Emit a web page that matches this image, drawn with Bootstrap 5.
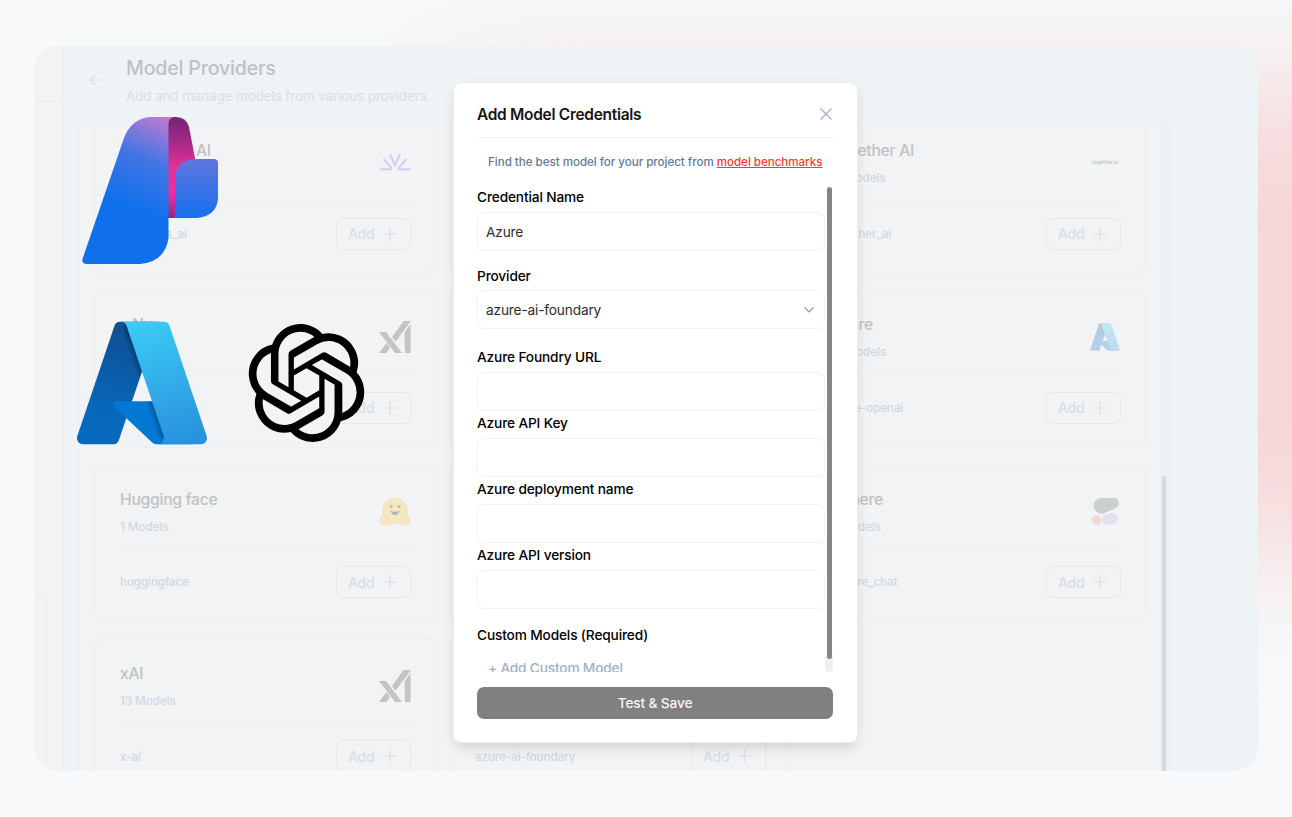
<!DOCTYPE html>
<html lang="en">
<head>
<meta charset="utf-8">
<title>Model Providers</title>
<meta name="viewport" content="width=device-width, initial-scale=1">
<link rel="stylesheet" href="https://cdn.jsdelivr.net/npm/bootstrap@5.3.0/dist/css/bootstrap.min.css">
<style>
body{width:1292px;height:817px;overflow:hidden;background:#f7f9fb;font-family:Inter,sans-serif;color:#111;position:relative}
.backdrop{position:absolute;inset:0;overflow:hidden}
.backdrop::before{content:"";position:absolute;left:400px;top:88px;right:-300px;height:462px;border-radius:110px;background:#f6d7d8;filter:blur(62px)}
.stage{position:relative;width:1224px;height:725px;margin:46px 0 0 34px;border-radius:24px;overflow:hidden;background:#eef3f6}
.rail{width:29px;flex:none;background:#f1f3f5;border-right:1px solid #e9edf0}
.rail-top{height:56px;border-bottom:1px solid #e9ebed}
.rail-box{width:13px;margin-top:493px;height:180px;border:1px solid #ebedef;border-left:0;border-top-right-radius:6px}
.page-head{height:75px;padding:10px 0 0 25px}
.back{width:14px;margin-top:17px;margin-right:24px;color:#d8dde1}
.page-title{font-size:19.6px;font-weight:500;line-height:25px;color:#bfc1c3;letter-spacing:-.2px}
.page-sub{font-size:13.5px;line-height:20px;margin-top:5px;color:#dbdfe3;letter-spacing:-.14px}
.board{width:1090px;height:700px;margin-left:16px;border:1px solid #ebeef1;border-radius:8px;overflow:hidden;background:#f1f3f5}
.tiles{display:grid;grid-template-columns:repeat(3,340px);grid-auto-rows:158.3px;gap:16px 15px;margin:-7px 0 0 15px;width:1050px}
.tile{border:1px solid #eceef0;border-radius:8px;padding:24px 23px 0 24px}
.tile-top{height:62px;border-bottom:1px solid #ebedf0}
.tile-name{font-size:15.7px;font-weight:500;line-height:22px;color:#c0c2c4;letter-spacing:-.27px}
.tile-count{font-size:11.7px;font-weight:500;line-height:16px;margin-top:8px;color:#d0d8e0;letter-spacing:-.06px}
.tile-logo{width:32px;margin-top:7px}
.tile-foot{padding-top:15.500px}
.tile-id{font-size:11.7px;font-weight:500;color:#d0d8e0;letter-spacing:-.12px;position:relative;top:1px}
.add-btn{width:75px;height:32px;border:1.5px solid #e7eaed;border-radius:7px;font-size:14px;font-weight:500;color:#d9dfe5;padding:0 13px 0 11px;letter-spacing:-.2px}
.track{width:8px;height:650px;background:#ecf0f3}
.thumb{width:4px;height:300px;margin:354px 0 0 2px;border-radius:2px;background:#d8dbdd}
.brand{position:absolute}
.dialog-box{position:absolute;left:454px;top:83px;width:403px;height:659px;background:#fff;border-radius:7px;padding:0 23px;box-shadow:0 0 0 1px #eceeef,0 8px 14px -3px rgba(0,0,0,.13),0 2px 18px rgba(0,0,0,.035)}
.dialog-top{height:55px;border-bottom:1.5px solid #f1f2f5;padding-top:8px}
.dialog-name{font-size:15.5px;font-weight:600;letter-spacing:-.3px;color:#151515;padding-top:1px}
.hint{font-size:11.6px;font-weight:500;line-height:16px;margin-top:16px;height:31px;color:#607b96;padding-left:11px;white-space:nowrap;letter-spacing:-.03px}
.hint a{color:#ff3636}
.form-view{height:487px;overflow:hidden}
.fields{width:348px}
.fields label{display:block;font-size:13.7px;font-weight:500;line-height:20px;letter-spacing:-.15px;height:27px;color:#000;padding-top:2px}
.fields .field{height:39px;border:1.3px solid #f1f2f6;border-radius:7px;font-size:13.7px;letter-spacing:-.17px;color:#2c2c2c;padding:1px 8px 0;background:#fff;box-shadow:none}
.group-gap{margin-top:14px}
.bar-track{width:8px;height:487px;background:linear-gradient(#fff 470px,#f0f0f1 470px);border-radius:4px}
.bar-thumb{width:5px;height:472px;margin:2px 0 0 2px;border-radius:3px;background:#858585}
.add-model{font-size:13.7px;font-weight:500;color:#9fb1c4;line-height:20px;padding-left:11px;margin-top:8px;letter-spacing:-.18px}
.save-btn{height:32px;border:0;border-radius:7px;background:#808080;color:#f6f6f6;font-size:13.7px;letter-spacing:-.15px;font-weight:500;padding:0;width:356px;margin-top:15px}
</style>
</head>
<body>
<svg width="0" height="0" class="position-absolute"><defs>
<linearGradient id="azL" x1="58.97" y1="7.41" x2="37.79" y2="75" gradientUnits="userSpaceOnUse"><stop stop-color="#114a8b"/><stop offset="1" stop-color="#0669bc"/></linearGradient>
<linearGradient id="azR" x1="48" y1="6" x2="75" y2="88" gradientUnits="userSpaceOnUse"><stop stop-color="#3ccbf4"/><stop offset="1" stop-color="#2892df"/></linearGradient>
<clipPath id="azClip"><path d="M33.34 6.54h26.04l-27.03 80.1H8L29.4 9.38zM71.17 60.26H29.88l27 29.200h24.700z"/></clipPath>
<symbol id="azure" viewBox="0 0 96 96">
<path fill="url(#azL)" d="M33.34 6.54h26.04l-27.03 80.1a4.15 4.15 0 0 1-3.94 2.81H8.15a4.14 4.14 0 0 1-3.93-5.47L29.4 9.38a4.15 4.15 0 0 1 3.94-2.83z"/>
<path fill="#0078d4" d="M71.17 60.26H29.88a1.91 1.91 0 0 0-1.3 3.31l26.53 24.76a4.17 4.17 0 0 0 2.85 1.13h23.38z"/>
<g clip-path="url(#azClip)" fill="none" stroke="#000" stroke-opacity=".055"><path stroke-width="6" d="M37 9l25.500 76"/><path stroke-width="4.500" d="M37 9l25.500 76"/><path stroke-width="3" d="M37 9l25.500 76"/><path stroke-width="2" d="M37 9l25.500 76"/></g>
<path fill="url(#azR)" d="M66.6 9.36a4.14 4.14 0 0 0-3.93-2.82H33.65a4.15 4.15 0 0 1 3.93 2.82l25.18 74.62a4.15 4.15 0 0 1-3.93 5.48h29.02a4.15 4.15 0 0 0 3.93-5.48z"/>
</symbol>
<symbol id="xai" viewBox="0 0 32 32"><path fill="currentColor" d="M0 11h7l16 21h-7zM0 32l7.4-10 3.6 4.7L7.5 32zM13 16 24.5 0H32L16.6 20.8zM25.500 11.5 31.500 3v29H26z"/></symbol>
<symbol id="plus" viewBox="0 0 14 14"><path d="M7 .5v13M.5 7h13" stroke="currentColor" stroke-width="1.1" fill="none"/></symbol>
</defs></svg>

<div class="backdrop"></div>

<main class="stage d-flex">
  <aside class="rail"><div class="rail-top"></div><div class="rail-box"></div></aside>
  <section class="flex-grow-1">
    <header class="page-head d-flex">
      <svg class="back" height="14" viewBox="0 0 14 14" fill="none" stroke="currentColor" stroke-width="1.2"><path d="M12.5 7H2M7 2 2 7l5 5"/></svg>
      <div><div class="page-title">Model Providers</div><div class="page-sub">Add and manage models from various providers</div></div>
    </header>
    <div class="board d-flex justify-content-between">
      <div class="tiles">
        <article class="tile"><div class="tile-top d-flex justify-content-between"><div><div class="tile-name" style="padding-left:76px">AI</div></div>
          <svg class="tile-logo" height="32" viewBox="0 0 32 32" fill="none" stroke="#d5cdf5" stroke-width="2.1"><path d="M11 7.500l5 10.500L21 7.500M4.500 12 12 20.500v1.800H.5M27.500 12 20 20.500v1.800h11.500"/></svg></div>
          <div class="tile-foot d-flex justify-content-between align-items-center"><span class="tile-id" style="padding-left:46px">s_ai</span><button class="btn add-btn d-flex align-items-center justify-content-between">Add <svg width="14" height="14"><use href="#plus"/></svg></button></div></article>
        <article class="tile"></article>
        <article class="tile"><div class="tile-top d-flex justify-content-between"><div><div class="tile-name">Together AI</div><div class="tile-count">12 Models</div></div>
          <svg class="tile-logo" height="32" viewBox="0 0 32 32"><text x="3" y="17" font-size="5" fill="#b4b6b8" textLength="26">together.ai</text></svg></div>
          <div class="tile-foot d-flex justify-content-between align-items-center"><span class="tile-id">together_ai</span><button class="btn add-btn d-flex align-items-center justify-content-between">Add <svg width="14" height="14"><use href="#plus"/></svg></button></div></article>

        <article class="tile"><div class="tile-top d-flex justify-content-between"><div><div class="tile-name" style="padding-left:12px">Nx</div></div>
          <svg class="tile-logo" height="32" color="#c2c4c6"><use href="#xai"/></svg></div>
          <div class="tile-foot d-flex justify-content-end align-items-center"><button class="btn add-btn d-flex align-items-center justify-content-between">Add <svg width="14" height="14"><use href="#plus"/></svg></button></div></article>
        <article class="tile"></article>
        <article class="tile"><div class="tile-top d-flex justify-content-between"><div><div class="tile-name">Azure</div><div class="tile-count">14 Models</div></div>
          <svg class="tile-logo" height="32" opacity=".25"><use href="#azure"/></svg></div>
          <div class="tile-foot d-flex justify-content-between align-items-center"><span class="tile-id">azure-openai</span><button class="btn add-btn d-flex align-items-center justify-content-between">Add <svg width="14" height="14"><use href="#plus"/></svg></button></div></article>

        <article class="tile"><div class="tile-top d-flex justify-content-between"><div><div class="tile-name">Hugging face</div><div class="tile-count">1 Models</div></div>
          <svg class="tile-logo" height="32" viewBox="0 0 32 32"><g stroke="#f4dfc8" stroke-width="1" fill="#f3e8c0"><circle cx="16" cy="15" r="12.500"/><path d="M3 20c1.500-2 4-1 7 4 2 1 3 3 1.500 4.200-3 1-7 .6-9 0-1.500-2-1-7 .5-8.200zM29 20c-1.500-2-4-1-7 4-2 1-3 3-1.500 4.200 3 1 7 .6 9 0 1.500-2 1-7-.5-8.200z"/></g><path d="M11.500 14.500q4.500 2.500 9 0-1 4.500-4.500 4.500t-4.500-4.500z" fill="#b3b7bc"/><circle cx="12" cy="10.500" r="1.600" fill="#bcbfc2"/><circle cx="20" cy="10.500" r="1.600" fill="#bcbfc2"/></svg></div>
          <div class="tile-foot d-flex justify-content-between align-items-center"><span class="tile-id">huggingface</span><button class="btn add-btn d-flex align-items-center justify-content-between">Add <svg width="14" height="14"><use href="#plus"/></svg></button></div></article>
        <article class="tile"></article>
        <article class="tile"><div class="tile-top d-flex justify-content-between"><div><div class="tile-name">Cohere</div><div class="tile-count">9 Models</div></div>
          <svg class="tile-logo" height="32" viewBox="0 0 32 32"><path d="M10.500 2h13.500a5.300 5.300 0 0 1 3 10L15 17.300A7.800 7.800 0 1 1 10.500 2z" fill="#c9d0cf"/><circle cx="7.500" cy="23.800" r="4.800" fill="#f2d8d4"/><path d="M18 18 23 16.800a5.900 5.900 0 0 1 0 11.800h-4.500A5.300 5.300 0 0 1 18 18z" fill="#e7dfef"/></svg></div>
          <div class="tile-foot d-flex justify-content-between align-items-center"><span class="tile-id">cohere_chat</span><button class="btn add-btn d-flex align-items-center justify-content-between">Add <svg width="14" height="14"><use href="#plus"/></svg></button></div></article>

        <article class="tile"><div class="tile-top d-flex justify-content-between"><div><div class="tile-name">xAI</div><div class="tile-count">13 Models</div></div>
          <svg class="tile-logo" height="32" color="#c2c4c6"><use href="#xai"/></svg></div>
          <div class="tile-foot d-flex justify-content-between align-items-center"><span class="tile-id">x-ai</span><button class="btn add-btn d-flex align-items-center justify-content-between">Add <svg width="14" height="14"><use href="#plus"/></svg></button></div></article>
        <article class="tile"><div class="tile-top"></div>
          <div class="tile-foot d-flex justify-content-between align-items-center"><span class="tile-id">azure-ai-foundary</span><button class="btn add-btn d-flex align-items-center justify-content-between">Add <svg width="14" height="14"><use href="#plus"/></svg></button></div></article>
      </div>
      <div class="track d-flex"><div class="thumb"></div></div>
    </div>
  </section>
</main>

<svg class="brand" style="left:82px;top:115.500px" width="137" height="149" viewBox="0 0 137 149" preserveAspectRatio="none">
  <defs>
    <linearGradient id="f1" x1="92" y1="0" x2="50" y2="92" gradientUnits="userSpaceOnUse"><stop stop-color="#cc7bcf"/><stop offset=".12" stop-color="#ac7ad4"/><stop offset=".5" stop-color="#4375e4"/><stop offset="1" stop-color="#1070ec"/></linearGradient>
    <linearGradient id="f2" x1="0" y1="0" x2="0" y2="1"><stop stop-color="#712575"/><stop offset=".2" stop-color="#9a2884"/><stop offset=".48" stop-color="#e02f97"/><stop offset=".75" stop-color="#ef30a4"/><stop offset="1" stop-color="#8c2c85"/></linearGradient>
    <linearGradient id="f3" x1="0" y1="0" x2="0" y2="1"><stop stop-color="#5f76df"/><stop offset="1" stop-color="#1670ec"/></linearGradient>
  </defs>
  <path fill="url(#f2)" d="M86 1h8q10 0 13 10l6 31-5 60H86z"/>
  <path fill="url(#f3)" d="M93 102V63Q94 44 113 43h19q4 0 4 4v35q-1 18-21 20z"/>
  <path fill="url(#f1)" d="M92 1H68Q49 3 42 22L.5 143q-1 5 4 5H58q25-2 28.500-26V8q0-6 5.500-7z"/>
</svg>
<svg class="brand" style="left:70.500px;top:311.500px" width="142" height="142"><use href="#azure"/></svg>
<svg class="brand" style="left:247.500px;top:324px" width="117" height="118" viewBox="0 0 24 24" preserveAspectRatio="none"><path d="M22.282 9.821a5.985 5.985 0 0 0-.516-4.910 6.046 6.046 0 0 0-6.510-2.900A6.065 6.065 0 0 0 4.981 4.182a5.985 5.985 0 0 0-3.998 2.900 6.046 6.046 0 0 0 .743 7.097 5.980 5.980 0 0 0 .510 4.911 6.051 6.051 0 0 0 6.515 2.900A5.985 5.985 0 0 0 13.260 24a6.056 6.056 0 0 0 5.772-4.206 5.990 5.990 0 0 0 3.997-2.900 6.056 6.056 0 0 0-.747-7.073z" fill="#f1f3f5"/><path d="M22.282 9.821a5.985 5.985 0 0 0-.516-4.910 6.046 6.046 0 0 0-6.510-2.900A6.065 6.065 0 0 0 4.981 4.182a5.985 5.985 0 0 0-3.998 2.900 6.046 6.046 0 0 0 .743 7.097 5.980 5.980 0 0 0 .510 4.911 6.051 6.051 0 0 0 6.515 2.900A5.985 5.985 0 0 0 13.260 24a6.056 6.056 0 0 0 5.772-4.206 5.990 5.990 0 0 0 3.997-2.900 6.056 6.056 0 0 0-.747-7.073zM13.260 22.430a4.476 4.476 0 0 1-2.876-1.040l.141-.081 4.779-2.758a.795.795 0 0 0 .392-.681v-6.737l2.020 1.168a.071.071 0 0 1 .038.052v5.583a4.504 4.504 0 0 1-4.494 4.494zM3.600 18.304a4.470 4.470 0 0 1-.535-3.014l.142.085 4.783 2.759a.771.771 0 0 0 .780 0l5.843-3.369v2.332a.080.080 0 0 1-.033.062L9.740 19.950a4.500 4.500 0 0 1-6.140-1.646zM2.340 7.896a4.485 4.485 0 0 1 2.366-1.973V11.600a.766.766 0 0 0 .388.676l5.815 3.355-2.020 1.168a.076.076 0 0 1-.071 0l-4.830-2.786A4.504 4.504 0 0 1 2.340 7.872zm16.597 3.855l-5.833-3.387L15.119 7.200a.076.076 0 0 1 .071 0l4.830 2.791a4.494 4.494 0 0 1-.676 8.105v-5.678a.790.790 0 0 0-.407-.667zm2.010-3.023l-.141-.085-4.774-2.782a.776.776 0 0 0-.785 0L9.409 9.230V6.897a.066.066 0 0 1 .028-.061l4.830-2.787a4.500 4.500 0 0 1 6.680 4.660zm-12.640 4.135l-2.020-1.164a.080.080 0 0 1-.038-.057V6.075a4.500 4.500 0 0 1 7.375-3.453l-.142.080L8.704 5.460a.795.795 0 0 0-.393.681zm1.097-2.365l2.602-1.500 2.607 1.500v2.999l-2.597 1.500-2.607-1.500z" fill="#000"/></svg>

<div class="dialog-box" role="dialog">
  <div class="dialog-top d-flex justify-content-between align-items-center"><span class="dialog-name">Add Model Credentials</span>
    <svg width="16" height="16" viewBox="0 0 16 16" stroke="#a3b4c8" stroke-width="1.400" fill="none"><path d="M2.500 2.500l11 11M13.500 2.500l-11 11"/></svg></div>
  <div class="hint">Find the best model for your project from <a href="#">model benchmarks</a></div>
  <div class="form-view d-flex">
    <div class="fields">
      <label>Credential Name</label><div class="field form-control d-flex align-items-center">Azure</div>
      <label style="margin-top:13px">Provider</label><div class="field form-control d-flex align-items-center justify-content-between" style="margin-top:-1px">azure-ai-foundary<svg width="12" height="12" viewBox="0 0 12 12" fill="none" stroke="#999" stroke-width="1.200" style="margin-right:1px"><path d="M1.500 3.500 6 8l4.500-4.500"/></svg></div>
      <label style="margin-top:16px">Azure Foundry URL</label><div class="field form-control"></div>
      <label>Azure API Key</label><div class="field form-control"></div>
      <label>Azure deployment name</label><div class="field form-control"></div>
      <label>Azure API version</label><div class="field form-control"></div>
      <label class="group-gap">Custom Models (Required)</label>
      <div class="add-model">+ Add Custom Model</div>
    </div>
    <div class="bar-track"><div class="bar-thumb"></div></div>
  </div>
  <button class="btn save-btn">Test &amp; Save</button>
</div>
<script src="https://cdn.jsdelivr.net/npm/bootstrap@5.3.0/dist/js/bootstrap.bundle.min.js"></script>
</body>
</html>
